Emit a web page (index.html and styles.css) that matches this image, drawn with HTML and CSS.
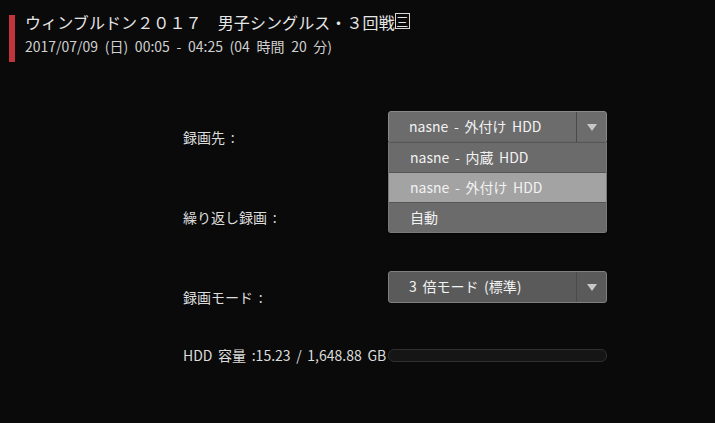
FILE: index.html
```html
<!DOCTYPE html>
<html lang="ja">
<head>
<meta charset="utf-8">
<link rel="stylesheet" href="styles.css">
</head>
<body>
<header class="header">
  <div class="accent"></div>
  <div class="titles">
    <div class="title">ウィンブルドン２０１７　男子シングルス・３回戦<span class="boxed">三</span></div>
    <div class="date">2017/07/09 (日) 00:05 - 04:25 (04 時間 20 分)</div>
  </div>
</header>
<main class="form">
  <div class="row">
    <div class="label">録画先 :</div>
    <div class="control">
      <div class="select focused">
        <span class="value">nasne - 外付け HDD</span>
        <span class="arrow"><span class="tri"></span></span>
      </div>
      <ul class="menu">
        <li class="item">nasne - 内蔵 HDD</li>
        <li class="item active">nasne - 外付け HDD</li>
        <li class="item">自動</li>
      </ul>
    </div>
  </div>
  <div class="row">
    <div class="label">繰り返し録画 :</div>
    <div class="control"></div>
  </div>
  <div class="row">
    <div class="label">録画モード :</div>
    <div class="control">
      <div class="select">
        <span class="value">3 倍モード (標準)</span>
        <span class="arrow"><span class="tri"></span></span>
      </div>
    </div>
  </div>
  <div class="hdd">
    <div class="hdd-label">HDD 容量 :15.23 / 1,648.88 GB</div>
    <div class="bar"></div>
  </div>
</main>
</body>
</html>
```
FILE: styles.css
```css
* { box-sizing: border-box; }
html, body { margin: 0; padding: 0; }
body {
  width: 715px;
  height: 423px;
  background: #0a0a0a;
  font-family: "Noto Sans CJK JP", "Noto Sans", sans-serif;
  color: #e0e0e0;
  overflow: hidden;
  word-spacing: 2.5px;
}
.header {
  display: flex;
  padding: 15px 0 0 9px;
}
.accent {
  width: 6px;
  height: 47px;
  background: #c1343b;
  flex: none;
}
.titles {
  margin-left: 10px;
  margin-top: -6px;
}
.title {
  font-size: 16px;
  line-height: 26px;
  color: #e6e6e6;
  letter-spacing: 0.1px;
  white-space: nowrap;
}
.boxed {
  display: inline-block;
  border: 1px solid #d8d8d8;
  font-size: 12px;
  line-height: 13px;
  width: 15px;
  height: 16px;
  text-align: center;
  vertical-align: 2px;
  padding-top: 1px;
}
.date {
  font-size: 14px;
  line-height: 20px;
  color: #d0d0d0;
  word-spacing: 3.5px;
  margin-top: 1px;
  white-space: nowrap;
}
.form {
  margin-top: 49px;
  padding-left: 183px;
  display: flex;
  flex-direction: column;
  gap: 48px;
}
.row {
  display: flex;
  height: 32px;
}
.label {
  width: 205px;
  font-size: 14px;
  line-height: 16px;
  margin-top: 18px;
  color: #dcdcdc;
}
.control {
  position: relative;
  width: 219px;
}
.select {
  display: flex;
  height: 32px;
  background: #5a5a5a;
  border: 1px solid #808080;
  border-radius: 3px;
  color: #f2f2f2;
  font-size: 14px;
}
.select.focused {
  background: #6c6c6c;
  border-color: #8a8a8a;
}
.value {
  flex: 1;
  padding-left: 20px;
  line-height: 29px;
  white-space: nowrap;
}
.arrow {
  width: 30px;
  border-left: 1px solid #4a4a4a;
  display: flex;
  align-items: center;
  justify-content: center;
}
.tri {
  width: 0;
  height: 0;
  border-left: 5px solid transparent;
  border-right: 5px solid transparent;
  border-top: 7px solid #c8c8c8;
}
.menu {
  position: absolute;
  left: 0;
  top: 31px;
  width: 219px;
  margin: 0;
  padding: 0;
  list-style: none;
  background: #6a6a6a;
  border: 1px solid #7a7a7a;
  border-top: none;
  border-radius: 0 0 3px 3px;
  box-shadow: 0 1px 2px rgba(0,0,0,0.6);
  z-index: 2;
}
.item {
  height: 30px;
  line-height: 28px;
  padding-left: 21px;
  font-size: 14px;
  color: #f2f2f2;
  border-top: 1px solid #565656;
  background: #6b6b6b;
}
.item.active {
  background: #a3a3a3;
}
.hdd {
  display: flex;
  align-items: center;
  margin-top: -4px;
  height: 16px;
}
.hdd-label {
  width: 205px;
  font-size: 14px;
  line-height: 16px;
  color: #dcdcdc;
  white-space: nowrap;
}
.bar {
  width: 219px;
  height: 13px;
  background: #151515;
  border: 1px solid #303030;
  border-radius: 6px;
}
```
